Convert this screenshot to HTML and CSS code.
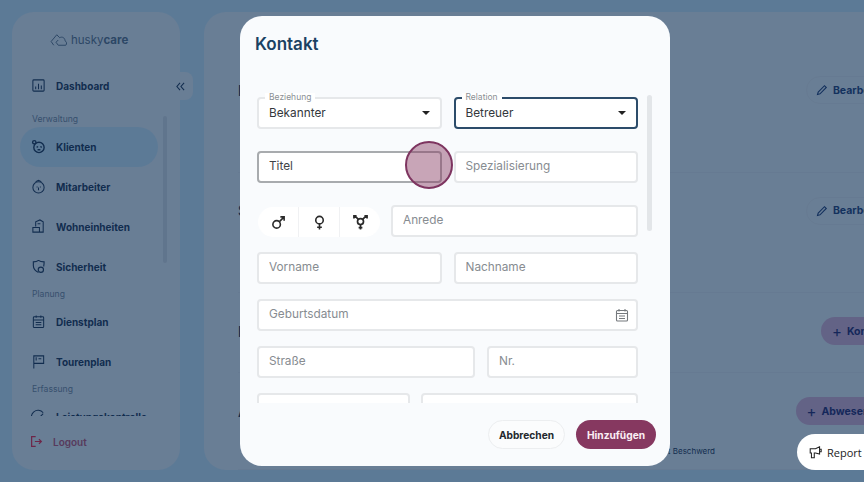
FILE: index.html
```html
<!DOCTYPE html>
<html lang="de">

<head>
    <meta charset="UTF-8">
    <meta name="viewport" content="width=device-width, initial-scale=1.0">
    <title>huskycare - Kontakt</title>
    <link rel="stylesheet" href="styles.css">
</head>

<body>
    <div class="app">
        <!-- Sidebar -->
        <aside class="sidebar">
            <div class="logo">
                <svg class="logo-icon" viewBox="0 0 24 18" fill="none" stroke="currentColor" stroke-width="1.3">
                    <path d="M5 16 L1.500 11 L9 2 L13 6 C16 4 20 6 20 10 C22 11 23 14 21 16 L11 16 L8 12 L11 9" />
                </svg>
                <span>husky<b>care</b></span>
            </div>
            <div class="collapse-tab">
                <svg viewBox="0 0 10 10" fill="none" stroke="currentColor" stroke-width="1.2">
                    <path d="M4.500 1 L1 5 L4.500 9 M9 1 L5.500 5 L9 9" />
                </svg>
            </div>
            <nav class="nav">
                <a class="nav-item">
                    <svg viewBox="0 0 16 16" fill="none" stroke="currentColor" stroke-width="1.1">
                        <rect x="2" y="2" width="12" height="12" rx="1" />
                        <path d="M5 12 V9 M8 12 V6 M11 12 V8" />
                    </svg>
                    Dashboard
                </a>
                <div class="nav-label first">Verwaltung</div>
                <a class="nav-item active">
                    <svg viewBox="0 0 16 16" fill="none" stroke="currentColor" stroke-width="1.5">
                        <circle cx="8.500" cy="9" r="5.500" />
                        <circle cx="3.500" cy="3.500" r="1.800" />
                        <path d="M6 9 L7.500 8 M10 8 L11.500 9 M7 11.500 H10" />
                    </svg>
                    Klienten
                </a>
                <a class="nav-item">
                    <svg viewBox="0 0 16 16" fill="none" stroke="currentColor" stroke-width="1.1">
                        <circle cx="8" cy="9" r="6" />
                        <path d="M5 3 L8 1.500 L11 3 M6 8.500 H7 M9.500 8.500 H10.500 M8 9 V12" />
                    </svg>
                    Mitarbeiter
                </a>
                <a class="nav-item">
                    <svg viewBox="0 0 16 16" fill="none" stroke="currentColor" stroke-width="1.1">
                        <path d="M5 8 V3 L9.500 1 L13 3 V14 H2 V9 H9 V14 M7 5 H10" />
                    </svg>
                    Wohneinheiten
                </a>
                <a class="nav-item">
                    <svg viewBox="0 0 16 16" fill="none" stroke="currentColor" stroke-width="1.2">
                        <path d="M8 1.500 C10 3 12 3 14 3 C14 5 14 6 13.500 8 M8 14.500 C5 13 2.500 11 2.500 7 V3 C4 3 6 3 8 1.500" />
                        <circle cx="10.500" cy="11.500" r="2.800" />
                    </svg>
                    Sicherheit
                </a>
                <div class="nav-label">Planung</div>
                <a class="nav-item">
                    <svg viewBox="0 0 16 16" fill="none" stroke="currentColor" stroke-width="1.1">
                        <rect x="2.500" y="3" width="11" height="11.500" rx="1" />
                        <path d="M2.500 6.500 H13.500 M5.500 1.500 V4 M10.500 1.500 V4 M5 9 H11 M5 11.500 H11" />
                    </svg>
                    Dienstplan
                </a>
                <a class="nav-item">
                    <svg viewBox="0 0 16 16" fill="none" stroke="currentColor" stroke-width="1.1">
                        <path d="M3 15.500 V2 H13.500 V10 H3 M5.500 3.500 V7 M8 5 H11" />
                    </svg>
                    Tourenplan
                </a>
                <div class="nav-label">Erfassung</div>
                <a class="nav-item">
                    <svg viewBox="0 0 16 16" fill="none" stroke="currentColor" stroke-width="1.1">
                        <path d="M2 13 A7 7 0 0 1 13 4 M8 10 L13 5" />
                    </svg>
                    Leistungskontrolle
                </a>
            </nav>
            <a class="logout">
                <svg viewBox="0 0 16 16" fill="none" stroke="#ff2040" stroke-width="1.5">
                    <path d="M7 2 H2 V14 H7 M6 8 H14 M11 5 L14 8 L11 11" />
                </svg>
                Logout
            </a>
        </aside>

        <!-- Main content behind the dialog -->
        <main class="main">
            <section class="section section-top">
                <div class="section-row">
                    <h3>Beziehung</h3>
                    <button class="btn-edit">
                        <svg viewBox="0 0 12 12" fill="none" stroke="currentColor" stroke-width="1.1">
                            <path d="M1.500 10.500 L2.200 8 L8.500 1.700 L10.300 3.500 L4 9.800 Z" />
                        </svg>
                        Bearbeiten
                    </button>
                </div>
            </section>
            <section class="section section-top">
                <div class="section-row">
                    <h3>Stammdaten</h3>
                    <button class="btn-edit">
                        <svg viewBox="0 0 12 12" fill="none" stroke="currentColor" stroke-width="1.1">
                            <path d="M1.500 10.500 L2.200 8 L8.500 1.700 L10.300 3.500 L4 9.800 Z" />
                        </svg>
                        Bearbeiten
                    </button>
                </div>
            </section>
            <section class="section section-mid">
                <div class="section-row">
                    <h3>Kontakte</h3>
                    <button class="btn-add btn-contact"><span class="plus">+</span> Kontakt</button>
                </div>
            </section>
            <section class="section">
                <div class="section-row">
                    <h3>Abwesenheiten</h3>
                    <button class="btn-add"><span class="plus">+</span> Abwesenheit</button>
                </div>
                <p class="section-note">Krankenhausaufenthalt Beschwerd</p>
            </section>
        </main>
    </div>

    <!-- Dialog -->
    <div class="overlay">
        <div class="modal">
            <h2>Kontakt</h2>
            <div class="modal-body">
                <div class="row row-wide">
                    <div class="select">
                        <span class="select-label">Beziehung</span>
                        <span class="select-value">Bekannter</span>
                        <span class="caret"></span>
                    </div>
                    <div class="select focused">
                        <span class="select-label">Relation</span>
                        <span class="select-value">Betreuer</span>
                        <span class="caret"></span>
                    </div>
                </div>
                <div class="row row-wide">
                    <input class="input input-hover" placeholder="Titel">
                    <input class="input" placeholder="Spezialisierung">
                </div>
                <div class="row">
                    <div class="gender">
                        <button>
                            <svg viewBox="0 0 16 16" fill="none" stroke="currentColor" stroke-width="1.700">
                                <circle cx="6" cy="10" r="4" />
                                <path d="M9 7 L14 2 M10 2 H14 V6" />
                            </svg>
                        </button>
                        <button>
                            <svg viewBox="0 0 16 16" fill="none" stroke="currentColor" stroke-width="1.700">
                                <circle cx="8" cy="5.500" r="4" />
                                <path d="M8 9.500 V15.500 M5.500 13 H10.500" />
                            </svg>
                        </button>
                        <button>
                            <svg viewBox="0 0 16 16" fill="none" stroke="currentColor" stroke-width="1.800">
                                <circle cx="8" cy="7" r="3.200" />
                                <path d="M8 10.200 V15.500 M6 13.500 H10 M5.700 4.700 L2 1 M1 3.800 V1 H3.800 M10.300 4.700 L14 1 M12.200 1 H15 V3.800" />
                            </svg>
                        </button>
                    </div>
                    <input class="input grow" placeholder="Anrede">
                </div>
                <div class="row">
                    <input class="input" placeholder="Vorname">
                    <input class="input" placeholder="Nachname">
                </div>
                <div class="row">
                    <div class="date-field">
                        <input class="input" placeholder="Geburtsdatum">
                        <svg class="date-icon" viewBox="0 0 14 14" fill="none" stroke="currentColor" stroke-width="1.100">
                            <rect x="1.500" y="2.500" width="11" height="10.500" rx="1" />
                            <path d="M1.500 5.500 H12.500 M4 1 V3.500 M10 1 V3.500 M4 8 H10 M4 10.500 H10" />
                        </svg>
                    </div>
                </div>
                <div class="row">
                    <input class="input street" placeholder="Straße">
                    <input class="input" placeholder="Nr.">
                </div>
                <div class="row">
                    <input class="input zip" placeholder="PLZ">
                    <input class="input" placeholder="Ort">
                </div>
            </div>
            <div class="scrollbar"></div>
            <div class="modal-footer">
                <button class="btn-cancel">Abbrechen</button>
                <button class="btn-submit">Hinzufügen</button>
            </div>
            <div class="click-marker"></div>
        </div>
    </div>

    <button class="report">
        <svg viewBox="0 0 16 16" fill="none" stroke="currentColor" stroke-width="1.300">
            <path d="M1.500 3.500 H8 L13 1 V10 L8 8.500 H6.500 V14.500 H3 V8.500 H1.500 Z M13 4 H15 V7 H13" />
        </svg>
        Report a bug
    </button>
</body>

</html>
```

FILE: styles.css
```css
* {
    box-sizing: border-box;
}

html,
body {
    height: 100%;
    margin: 0;
}

body {
    position: relative;
    overflow: hidden;
    background-color: #d5f1ff;
    font-family: Inter, "Open Sans", sans-serif;
    color: #1a2f4d;
}

/* Page behind the dialog */
.app {
    display: flex;
    gap: 24px;
    width: 1000px;
    height: 100%;
    padding: 12px;
}

.sidebar {
    position: relative;
    display: flex;
    flex-direction: column;
    flex: none;
    width: 168px;
    height: 458px;
    background-color: #f6f9fc;
    border-radius: 22px;
}

.logo {
    display: flex;
    align-items: center;
    gap: 3px;
    height: 54px;
    padding: 2px 0 0 38px;
    font-size: 11.500px;
    color: #5d7085;
}

.logo b {
    font-weight: 700;
}

.logo-icon {
    width: 18px;
    height: 14px;
}

.collapse-tab {
    position: absolute;
    top: 60px;
    left: 156px;
    display: flex;
    align-items: center;
    justify-content: center;
    width: 25px;
    height: 28px;
    background-color: #f6f9fc;
    border-radius: 0 8px 8px 0;
}

.collapse-tab svg {
    width: 9px;
    height: 9px;
}

.nav {
    position: relative;
    height: 350px;
    overflow: hidden;
}

.nav::after {
    content: "";
    position: absolute;
    top: 50px;
    left: 151px;
    width: 4px;
    height: 147px;
    background-color: #dfe3e8;
    border-radius: 2px;
}

.nav-item {
    display: flex;
    align-items: center;
    gap: 10px;
    width: 138px;
    height: 40px;
    margin-left: 8px;
    padding: 0 0 1px 11px;
    font-size: 10px;
    font-weight: 700;
    white-space: nowrap;
    border-radius: 20px;
}

.nav-item svg {
    flex: none;
    width: 15px;
    height: 15px;
}

.nav-item.active {
    background-color: #d5f1ff;
}

.nav-label {
    height: 15px;
    padding-left: 20px;
    font-size: 8.600px;
    line-height: 15px;
    color: #79889a;
}

.nav-label.first {
    margin-top: 6px;
}

.logout {
    display: flex;
    align-items: center;
    gap: 10px;
    margin-top: 19px;
    padding-left: 18px;
    font-size: 10px;
    font-weight: 600;
    color: #c8506e;
}

.logout svg {
    width: 13px;
    height: 13px;
}

.main {
    flex: none;
    width: 760px;
    height: 458px;
    padding: 40px 0 0 34px;
    background-color: #f6f9fc;
    border-radius: 22px;
    overflow: hidden;
}

.section {
    height: 97px;
    padding: 24px 62px 0 0;
    border-bottom: 1px solid #eef1f4;
}

.section-top {
    height: 120.500px;
}

.section-mid {
    height: 80px;
}

.section-row {
    display: flex;
    align-items: center;
    justify-content: space-between;
}

.section-row h3 {
    margin: 0;
    font-size: 14px;
    font-weight: 600;
}

.section-note {
    margin: 21px 0 0 0;
    padding-right: 187px;
    font-size: 8px;
    text-align: right;
}

.btn-edit,
.btn-add {
    display: flex;
    align-items: center;
    height: 28px;
    font-family: inherit;
    font-size: 10.500px;
    font-weight: 700;
    border-radius: 14px;
}

.btn-edit {
    gap: 5px;
    padding: 0 12px 0 9px;
    color: #1f3a72;
    background: none;
    border: 1px solid #eef1f4;
}

.btn-edit svg {
    width: 12px;
    height: 12px;
}

.btn-add {
    gap: 5px;
    padding: 0 13px 0 11px;
    color: #251f6a;
    background-color: #e6b6d6;
    border: none;
}

.btn-contact {
    margin-right: 2px;
}

.plus {
    font-size: 15px;
    font-weight: 400;
}

/* Dimmed layer and dialog */
.overlay {
    position: absolute;
    inset: 0;
    padding: 16px 0 0 240px;
    background-color: rgba(11, 44, 80, 0.6);
    backdrop-filter: blur(0.6px);
}

.modal {
    position: relative;
    display: flex;
    flex-direction: column;
    width: 430px;
    height: 450px;
    background-color: #f9fbfd;
    border-radius: 22px;
}

.modal h2 {
    height: 74px;
    margin: 0;
    padding: 18px 0 0 15px;
    font-size: 17px;
    font-weight: 600;
    line-height: 20px;
    color: #1b4263;
}

.modal-body {
    display: flex;
    flex-direction: column;
    gap: 15px;
    height: 313px;
    padding: 7px 32px 0 17px;
    overflow: hidden;
}

.scrollbar {
    position: absolute;
    top: 79px;
    left: 407px;
    width: 5px;
    height: 136px;
    background-color: #e3e6e9;
    border-radius: 3px;
}

.row {
    display: flex;
    flex: none;
    gap: 12px;
    height: 32px;
}

.row-wide {
    margin-bottom: 7px;
}

.input,
.select {
    flex: 1;
    min-width: 0;
    height: 32px;
    font-family: inherit;
    font-size: 11.800px;
    color: #33373b;
    background-color: #fff;
    border: 2px solid #e6e8ea;
    border-radius: 4px;
}

.input {
    padding: 0 10px 2px;
}

.input::placeholder {
    color: #878c91;
    opacity: 1;
}

.input-hover {
    border-color: #a8abae;
}

.input-hover::placeholder {
    color: #3f4347;
}

.select {
    position: relative;
    padding: 0 10px;
    line-height: 27px;
}

.select.focused {
    border-color: #2c4c6a;
}

.select-label {
    position: absolute;
    top: -6px;
    left: 6px;
    padding: 0 4px;
    font-size: 8.500px;
    line-height: 8px;
    color: #8a8f94;
    background-color: #fff;
}

.select-value {
    display: block;
    padding-top: 1px;
}

.caret {
    position: absolute;
    top: 12px;
    right: 10px;
    border-top: 4px solid #222;
    border-left: 4px solid transparent;
    border-right: 4px solid transparent;
}

.gender {
    display: flex;
    flex: none;
    width: 122px;
    height: 30px;
    margin: 2px -1px 0 1px;
    background-color: #fff;
    border-radius: 15px;
}

.gender button {
    display: flex;
    flex: 1;
    align-items: center;
    justify-content: center;
    padding: 0;
    color: #2a2a2a;
    background: none;
    border: none;
    border-left: 1px solid #f0f1f3;
}

.gender button:first-child {
    border-left: none;
}

.gender svg {
    width: 15px;
    height: 15px;
}

.grow {
    flex: 1;
}

.date-field {
    position: relative;
    display: flex;
    flex: 1;
}

.date-icon {
    position: absolute;
    top: 9px;
    right: 9px;
    width: 14px;
    height: 14px;
    color: #75797d;
}

.street {
    flex: none;
    width: 218px;
}

.zip {
    flex: none;
    width: 153px;
    margin-right: -1px;
}

.modal-footer {
    display: flex;
    justify-content: flex-end;
    gap: 11px;
    padding: 17px 14px 0 0;
}

.btn-cancel,
.btn-submit {
    height: 29px;
    padding: 0;
    font-family: inherit;
    font-size: 10.200px;
    font-weight: 700;
    border-radius: 15px;
}

.btn-cancel {
    width: 77px;
    color: #23282d;
    background-color: #fbfcfd;
    border: 1px solid #eceef0;
}

.btn-submit {
    width: 80px;
    color: #fbeef4;
    background-color: #863860;
    border: none;
}

.click-marker {
    position: absolute;
    top: 125px;
    left: 165px;
    width: 48px;
    height: 48px;
    background-color: rgba(134, 56, 96, 0.45);
    border: 2px solid #7e3560;
    border-radius: 50%;
}

.report {
    position: absolute;
    top: 434px;
    left: 797px;
    display: flex;
    align-items: center;
    gap: 5px;
    width: 120px;
    height: 36px;
    padding: 0 0 0 12px;
    font-family: "Open Sans", sans-serif;
    font-size: 11px;
    color: #222;
    background-color: #fff;
    border: none;
    border-radius: 18px;
    white-space: nowrap;
}

.report svg {
    width: 13px;
    height: 13px;
}
```
